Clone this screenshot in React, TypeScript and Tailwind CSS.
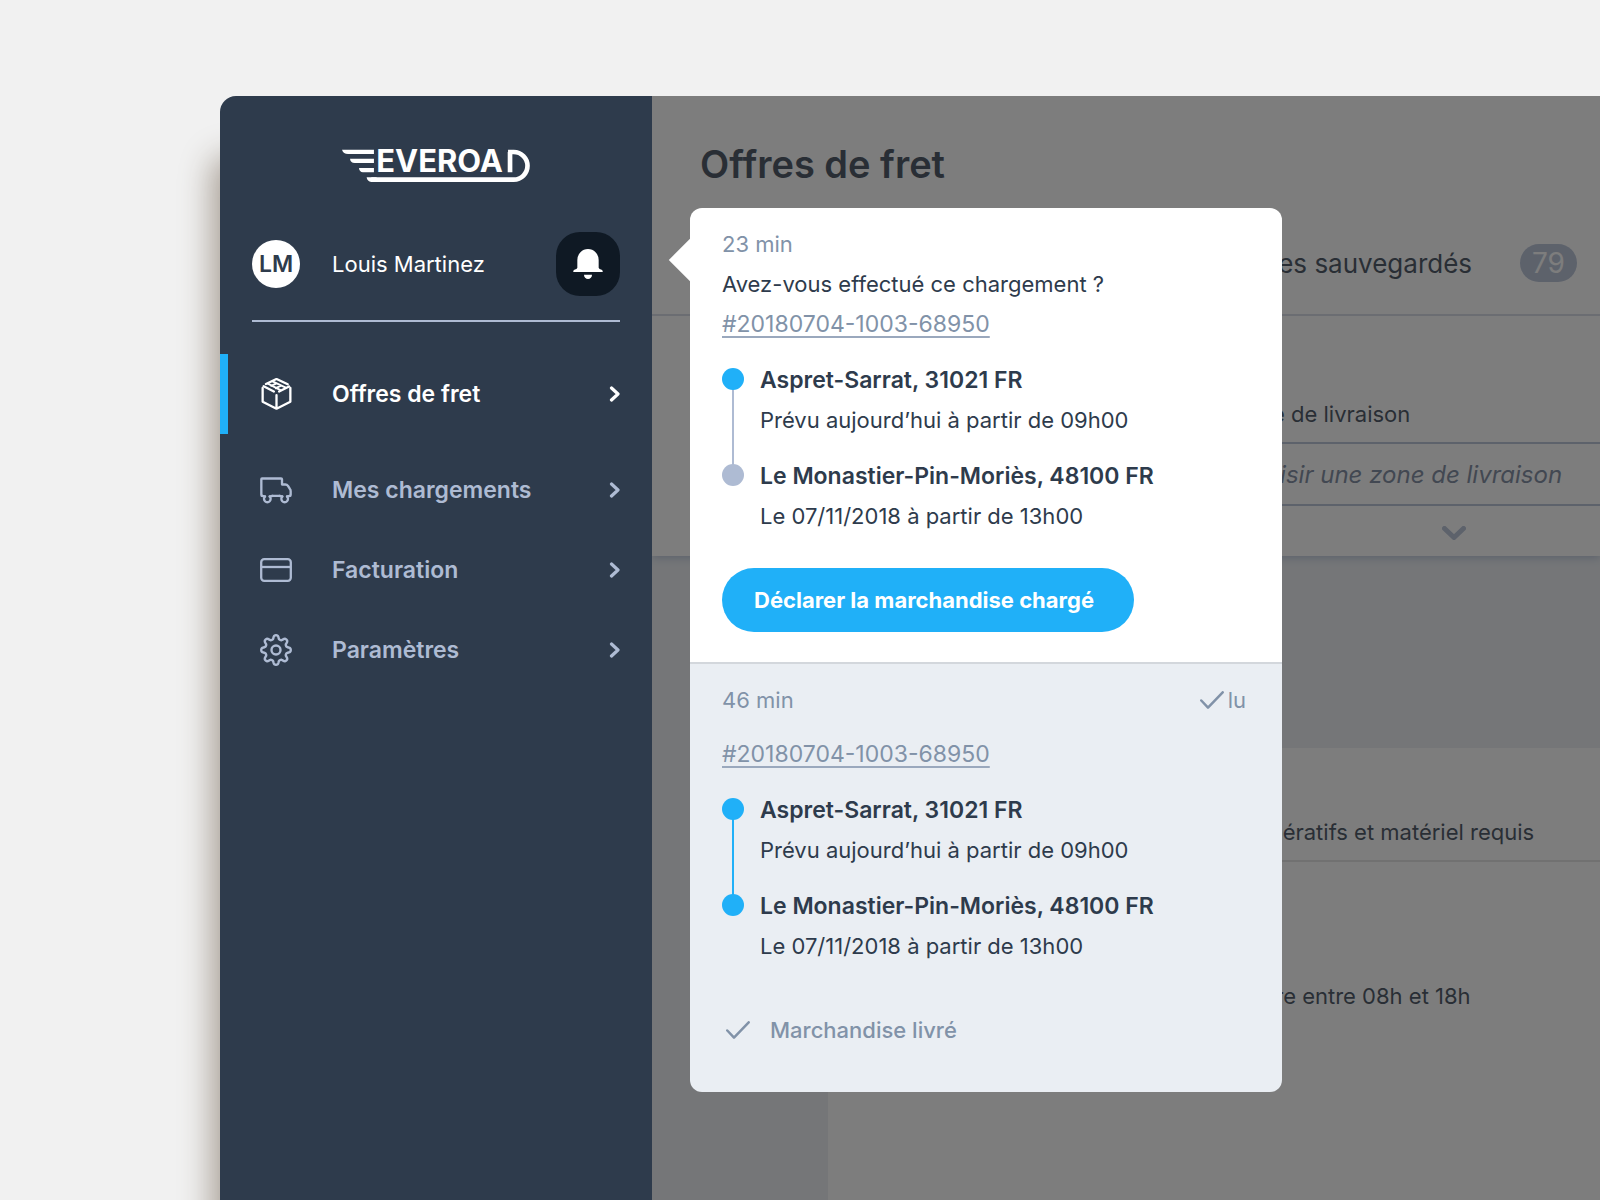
import { useState } from "react";
import type { ReactNode } from "react";

type Stop = { place: string; time: string; done: boolean };

const stops: Stop[] = [
  { place: "Aspret-Sarrat, 31021 FR", time: "Prévu aujourd’hui à partir de 09h00", done: true },
  { place: "Le Monastier-Pin-Moriès, 48100 FR", time: "Le 07/11/2018 à partir de 13h00", done: false },
];

const deliveredStops = stops.map((stop) => ({ ...stop, done: true }));

function Logo() {
  return (
    <svg viewBox="36 2 565 180" className="h-[60px] w-[188px]" role="img" aria-label="Everoad">
      <g fill="#fff">
        <path d="M36 43H132V56H54Q40 56 36 43Z" />
        <path d="M60 70H132V83H74Q62 83 60 70Z" />
        <path d="M87 98H132V111H99Q88 110 87 98Z" />
        <path d="M110 126H140V140H124Q112 139 110 126Z" />
        <text x="139" y="111" fontSize="93" fontWeight="700" fontFamily="Inter, sans-serif">
          EVEROA
        </text>
      </g>
      <path d="M124 133H552A41 41 0 0 0 552 50H535M541 50V111" fill="none" stroke="#fff" strokeWidth="14" />
    </svg>
  );
}

function BellIcon() {
  return (
    <svg viewBox="0 0 90 90" className="size-[30px]" fill="currentColor" aria-hidden="true">
      <path d="M13 33a32 33 0 0 1 64 0v23q1 4 9 6 4 2 3 7H1q-1-5 3-7 8-2 9-6Z" />
      <path d="M33 77h24a12 13 0 0 1-24 0Z" />
    </svg>
  );
}

function BoxIcon() {
  return (
    <svg viewBox="0 0 92 97" className="h-8 w-[31px]" fill="none" stroke="currentColor" strokeWidth="7" strokeLinejoin="round" aria-hidden="true">
      <path d="M4 30V72L46 93 88 72V30M46 52V93" strokeLinecap="round" />
      <path d="M14 18 46 3 80 19M7 25 38 41M54 41 84 26" strokeLinecap="round" />
      <path d="M20 17 58 37M34 10 74 29M30 24 46 16M44 31 60 23" strokeWidth="6" strokeLinecap="round" />
    </svg>
  );
}

function TruckIcon() {
  return (
    <svg viewBox="0 0 96 80" className="h-[27px] w-8" fill="none" stroke="currentColor" strokeWidth="7" strokeLinejoin="round" aria-hidden="true">
      <path d="M9 56H6Q4 56 4 53V6Q4 4 6 4H63Q66 4 66 6V22H76Q81 22 84 26L90 36Q92 38 92 42V53Q92 56 90 56H87M35 56H61" />
      <path d="M15 58A10 10 0 1 0 29 58M67 58A10 10 0 1 0 81 58" strokeLinecap="round" />
      <path d="M6 56 15 58M29 58 38 56M58 56 67 58M81 58 90 56" strokeLinecap="round" />
    </svg>
  );
}

function CardIcon() {
  return (
    <svg viewBox="0 0 32 24" className="h-6 w-8" fill="none" stroke="currentColor" strokeWidth="2.300" aria-hidden="true">
      <rect x="1.200" y="1.200" width="29.600" height="21.600" rx="3" />
      <path d="M1 9h30" />
    </svg>
  );
}

// eight rounded teeth on a circle
const gearPoints = Array.from({ length: 160 }, (_, i) => {
  const angle = (i / 160) * Math.PI * 2;
  const r = 12.8 + 2.1 * Math.tanh(1.6 * Math.cos(8 * angle));
  return `${(16 + r * Math.sin(angle)).toFixed(2)},${(16 - r * Math.cos(angle)).toFixed(2)}`;
}).join(" ");

function GearIcon() {
  return (
    <svg viewBox="0 0 32 32" className="size-8" fill="none" stroke="currentColor" strokeWidth="2.400" strokeLinejoin="round" aria-hidden="true">
      <polygon points={gearPoints} />
      <circle cx="16" cy="16" r="4.500" />
    </svg>
  );
}

function ChevronIcon() {
  return (
    <svg viewBox="0 0 11 16" className="h-4 w-[11px]" fill="none" stroke="currentColor" strokeWidth="3.200" strokeLinecap="round" strokeLinejoin="round" aria-hidden="true">
      <path d="M2.500 2l6.500 6L2.500 14" />
    </svg>
  );
}

function CheckIcon() {
  return (
    <svg viewBox="0 0 24 18" className="h-[18px] w-6 shrink-0" fill="none" stroke="currentColor" strokeWidth="2.500" strokeLinecap="round" strokeLinejoin="round" aria-hidden="true">
      <path d="M1.300 9.500 8 16.600 22.700 1.300" />
    </svg>
  );
}

function NavItem({ icon, label, active, onSelect }: { icon: ReactNode; label: string; active: boolean; onSelect: () => void }) {
  return (
    <li>
      <a
        href="#"
        onClick={(e) => {
          e.preventDefault();
          onSelect();
        }}
        className={
          active
            ? "mb-4 flex h-20 items-center border-l-8 border-[#20b0f8] px-8 text-[23px] font-semibold text-white"
            : "flex h-20 items-center border-l-8 border-transparent px-8 text-[23px] font-semibold text-[#aebbd3]"
        }
      >
        <span className="mr-10 flex w-8 justify-center">{icon}</span>
        <span className="flex-1">{label}</span>
        <ChevronIcon />
      </a>
    </li>
  );
}

function Route({ items }: { items: Stop[] }) {
  return (
    <ol className="mt-4 flex flex-col gap-4">
      {items.map((stop, i) => (
        <li key={stop.place} className="relative flex gap-4 leading-10">
          {i < items.length - 1 && (
            <span className={stop.done && items[i + 1].done ? "absolute top-5 left-[10px] h-24 w-0.5 bg-[#20b0f8]" : "absolute top-5 left-[10px] h-24 w-0.5 bg-[#aebbd3]"} />
          )}
          <span className={stop.done ? "relative z-10 mt-2 size-[22px] rounded-full bg-[#20b0f8]" : "relative z-10 mt-2 size-[22px] rounded-full bg-[#aebbd3]"} />
          <div>
            <p className="text-[23px] leading-10 font-semibold">{stop.place}</p>
            <p>{stop.time}</p>
          </div>
        </li>
      ))}
    </ol>
  );
}

function Reference() {
  return (
    <a href="#" className="block text-[23px] leading-10 text-[#8192a8] underline decoration-[#9aa8bd] decoration-2 underline-offset-4">
      #20180704-1003-68950
    </a>
  );
}

function Notifications() {
  return (
    <div className="absolute -top-6 left-[134px] z-20 w-[592px] text-[#2e3b4c]">
      <span className="absolute top-[37px] -left-[15px] size-[30px] rotate-45 bg-white" />
      <div className="relative overflow-hidden rounded-xl">
        <section className="border-b-2 border-[#d3d7dc] bg-white px-8 pt-4 pb-[30px] leading-10">
          <p className="text-[#8192a8]">23 min</p>
          <p>Avez-vous effectué ce chargement ?</p>
          <Reference />
          <Route items={stops} />
          <button type="button" className="mt-8 h-16 rounded-full bg-[#20b0f8] pr-10 pl-8 font-bold text-white">
            Déclarer la marchandise chargé
          </button>
        </section>
        <section className="bg-[#eaeef3] px-8 pt-4 pb-[42px] leading-10">
          <div className="mb-3.5 flex items-center justify-between pr-1 text-[#8192a8]">
            <p>46 min</p>
            <p className="flex items-center gap-1">
              <CheckIcon />
              lu
            </p>
          </div>
          <Reference />
          <Route items={deliveredStops} />
          <p className="mt-11 flex items-center gap-5 pl-1 font-medium text-[#8192a8]">
            <CheckIcon />
            Marchandise livré
          </p>
        </section>
      </div>
    </div>
  );
}

function Sidebar() {
  const [current, setCurrent] = useState("Offres de fret");
  const [open, setOpen] = useState(true);
  const links = [
    { label: "Offres de fret", icon: <BoxIcon /> },
    { label: "Mes chargements", icon: <TruckIcon /> },
    { label: "Facturation", icon: <CardIcon /> },
    { label: "Paramètres", icon: <GearIcon /> },
  ];

  return (
    <aside className="relative z-10 w-[432px] shrink-0 rounded-tl-2xl bg-[#2e3b4c]">
      <div className="flex justify-center pt-10">
        <Logo />
      </div>
      <div className="mx-8 mt-9 flex items-center border-b-2 border-[#aebbd3] pb-6">
        <span className="mr-8 flex size-12 items-center justify-center rounded-full bg-white text-[23px] font-semibold text-[#2e3b4c]">LM</span>
        <span className="flex-1 text-white">Louis Martinez</span>
        <div className="relative">
          <button
            type="button"
            aria-label="Notifications"
            aria-expanded={open}
            onClick={() => setOpen(!open)}
            className="flex size-16 items-center justify-center rounded-3xl bg-[#0f1924] text-white"
          >
            <BellIcon />
          </button>
          {open && <Notifications />}
        </div>
      </div>
      <nav className="mt-8">
        <ul>
          {links.map((link) => (
            <NavItem key={link.label} icon={link.icon} label={link.label} active={link.label === current} onSelect={() => setCurrent(link.label)} />
          ))}
        </ul>
      </nav>
    </aside>
  );
}

function Offers() {
  return (
    <main className="relative min-w-0 flex-1 overflow-hidden bg-[#eaeef3]">
      <div className="bg-white shadow-[0_2px_8px_#aebbd3]">
        <h1 className="flex h-[136px] items-center pl-12 text-[38px] font-semibold">Offres de fret</h1>
        <div className="border-b-2 border-[#d2d8e3] pb-5 pl-[580px]">
          <a href="#" className="flex h-[62px] items-center gap-12 text-[26px] whitespace-nowrap">
            Filtres sauvegardés
            <span className="rounded-full bg-[#aebbd3] px-3 text-[28px] leading-[38px] text-white">79</span>
          </a>
        </div>
        <div className="pt-[78px] pl-[548px]">
          <label htmlFor="delivery" className="mb-2 block pl-8 leading-10">
            Zone de livraison
          </label>
          <input
            id="delivery"
            type="text"
            placeholder="Choisir une zone de livraison"
            className="h-16 w-full border-y-2 border-l-2 border-[#aebbd3] pl-8 text-2xl placeholder:text-[#6c7a93] placeholder:italic"
          />
          <button type="button" aria-label="Plus de filtres" className="ml-[242px] flex h-[50px] items-center pt-1 text-[#aebbd3]">
            <svg viewBox="0 0 24 14" className="h-3.5 w-6" fill="none" stroke="currentColor" strokeWidth="5" strokeLinecap="round" strokeLinejoin="round">
              <path d="M2.500 2.500 12 11.500 21.500 2.500" />
            </svg>
          </button>
        </div>
      </div>
      <div className="mt-48 ml-44 min-h-[600px] bg-white">
        <table className="w-full text-left leading-10 whitespace-nowrap">
          <thead>
            <tr className="border-b-2 border-[#e0e0e0]">
              <th className="pt-16 pb-2 pl-[416px] font-normal">Impératifs et matériel requis</th>
            </tr>
          </thead>
          <tbody>
            <tr>
              <td className="pt-[114px] pl-[416px]">Libre entre 08h et 18h</td>
            </tr>
          </tbody>
        </table>
      </div>
      <div className="absolute inset-0 bg-[#262626]/60" />
    </main>
  );
}

export default function App() {
  return (
    <div className="flex h-screen overflow-hidden bg-[#f1f1f1] pt-24 pl-[220px] font-['Inter',sans-serif] text-[22px] text-[#2e3b4c]">
      <div className="flex flex-1 rounded-tl-2xl shadow-[-8px_60px_32px_#a89f95]">
        <Sidebar />
        <Offers />
      </div>
    </div>
  );
}
